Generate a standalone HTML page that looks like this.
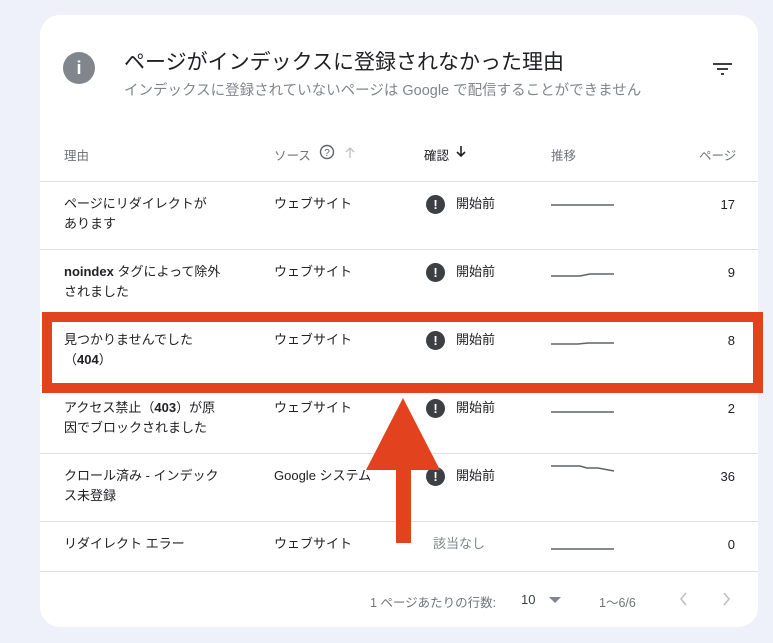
<!DOCTYPE html>
<html><head><meta charset="utf-8"><style>
*{margin:0;padding:0;box-sizing:border-box}
body{width:773px;height:643px;background:#eef1f9;font-family:"Liberation Sans","Noto Sans CJK JP",sans-serif;position:relative;overflow:hidden;color:#202124}
.card{position:absolute;left:40px;top:15px;width:718px;height:612px;background:#fff;border-radius:20px}
.abs{position:absolute}
.t{font-size:13px;line-height:20px}
.hd{font-size:12.5px;color:#70757a}
.line{position:absolute;left:0;width:718px;height:1px;background:#e0e0e0}
.ic{position:absolute;width:19px;height:19px;border-radius:50%;background:#3c4043;color:#fff;font-size:13px;font-weight:bold;text-align:center;line-height:19px}
</style></head><body>
<div class="card">
<div class="abs" style="left:23px;top:37px;width:32px;height:32px;border-radius:50%;background:#80868b;color:#fff;font-weight:bold;font-size:18px;text-align:center;line-height:32px">i</div>
<div class="abs" style="left:84px;top:31px;font-size:21px;color:#202124">ページがインデックスに登録されなかった理由</div>
<div class="abs" style="left:84px;top:64px;font-size:14.5px;color:#80868b">インデックスに登録されていないページは Google で配信することができません</div>
<svg class="abs" style="left:673px;top:47px" width="20" height="14"><rect x="0" y="1" width="19" height="2" fill="#3c4043"/><rect x="4" y="6" width="11" height="2" fill="#3c4043"/><rect x="8" y="11" width="3" height="2" fill="#3c4043"/></svg>
<div class="abs hd" style="left:24px;top:130px">理由</div>
<div class="abs hd" style="left:234px;top:130px">ソース</div>
<svg class="abs" style="left:279px;top:129px" width="16" height="16"><circle cx="8" cy="8" r="6.5" fill="none" stroke="#5f6368" stroke-width="1.4"/><text x="8" y="12" font-size="10" text-anchor="middle" fill="#5f6368" font-family="Liberation Sans">?</text></svg>
<svg class="abs" style="left:304px;top:131px" width="12" height="12" fill="none" stroke="#c0c0c0" stroke-width="1.3"><path d="M6 12V2M2 6L6 2L10 6"/></svg>
<div class="abs hd" style="left:384px;top:130px;color:#202124">確認</div>
<svg class="abs" style="left:415px;top:131px" width="12" height="12" fill="none" stroke="#202124" stroke-width="1.6"><path d="M6 0V10M2 6L6 10L10 6"/></svg>
<div class="abs hd" style="left:511px;top:130px">推移</div>
<div class="abs hd" style="left:659px;top:130px">ページ</div>
<div class="line" style="top:166px"></div>
<div class="line" style="top:234px"></div>
<div class="line" style="top:370px"></div>
<div class="line" style="top:438px"></div>
<div class="line" style="top:506px"></div>
<div class="line" style="top:556px"></div>

<div class="abs t" style="left:24px;top:179px">ページにリダイレクトが<br>あります</div>
<div class="abs t" style="left:24px;top:247px"><b>noindex</b> タグによって除外<br>されました</div>
<div class="abs t" style="left:24px;top:315px">見つかりませんでした<br>（<b>404</b>）</div>
<div class="abs t" style="left:24px;top:383px">アクセス禁止（<b>403</b>）が原<br>因でブロックされました</div>
<div class="abs t" style="left:24px;top:451px">クロール済み - インデック<br>ス未登録</div>
<div class="abs t" style="left:24px;top:519px">リダイレクト エラー</div>

<div class="abs t" style="left:234px;top:179px">ウェブサイト</div>
<div class="abs t" style="left:234px;top:247px">ウェブサイト</div>
<div class="abs t" style="left:234px;top:315px">ウェブサイト</div>
<div class="abs t" style="left:234px;top:383px">ウェブサイト</div>
<div class="abs t" style="left:234px;top:451px">Google システム</div>
<div class="abs t" style="left:234px;top:519px">ウェブサイト</div>

<div class="ic" style="left:386px;top:180px">!</div><div class="abs t" style="left:416px;top:179px">開始前</div>
<div class="ic" style="left:386px;top:248px">!</div><div class="abs t" style="left:416px;top:247px">開始前</div>
<div class="ic" style="left:386px;top:316px">!</div><div class="abs t" style="left:416px;top:315px">開始前</div>
<div class="ic" style="left:386px;top:384px">!</div><div class="abs t" style="left:416px;top:383px">開始前</div>
<div class="ic" style="left:386px;top:452px">!</div><div class="abs t" style="left:416px;top:451px">開始前</div>
<div class="abs t" style="left:393px;top:519px;color:#80868b">該当なし</div>

<svg class="abs" style="left:510px;top:180px" width="66" height="360" fill="none" stroke="#5f6368" stroke-width="1.5">
<path d="M1 10H64"/>
<path d="M1 81H30L40 79H64"/>
<path d="M1 149H28L38 148H64"/>
<path d="M1 217H64"/>
<path d="M1 271H30L37 273H48L64 276"/>
<path d="M1 354H64"/>
</svg>

<div class="abs t" style="right:23px;top:180px">17</div>
<div class="abs t" style="right:23px;top:248px">9</div>
<div class="abs t" style="right:23px;top:316px">8</div>
<div class="abs t" style="right:23px;top:384px">2</div>
<div class="abs t" style="right:23px;top:452px">36</div>
<div class="abs t" style="right:23px;top:520px">0</div>

<div class="abs" style="left:330px;top:577px;font-size:12.5px;color:#70757a">1 ページあたりの行数:</div>
<div class="abs" style="left:481px;top:577px;font-size:13px;color:#3c4043">10</div>
<svg class="abs" style="left:509px;top:582px" width="12" height="6"><path d="M0 0H12L6 6Z" fill="#80868b"/></svg>
<div class="abs" style="left:559px;top:577px;font-size:12.5px;color:#70757a">1〜6/6</div>
<svg class="abs" style="left:638px;top:577px" width="60" height="14" fill="none" stroke="#bdc1c6" stroke-width="1.6"><path d="M8 1L3 7L8 13"/><path d="M46 1L51 7L46 13"/></svg>
</div>

<div class="abs" style="left:42px;top:312px;width:721px;height:81px;border:10px solid #e3421f"></div>
<svg class="abs" style="left:360px;top:395px" width="90" height="150"><path d="M43 3L80 75H51V148H36V75H6Z" fill="#e3421f"/></svg>
</body></html>
